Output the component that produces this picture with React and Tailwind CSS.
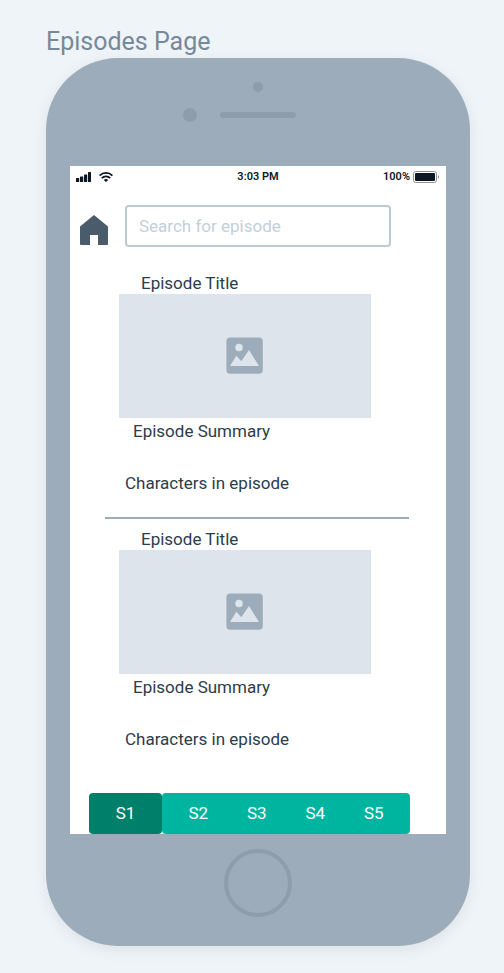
const seasons = ['S2', 'S3', 'S4', 'S5'];

function StatusBar() {
  return (
    <div className="grid h-5 grid-cols-3 items-center px-1.5 text-[11px] leading-5 font-semibold text-[#0d1822]">
      <div className="flex items-center gap-2">
        <svg width="15" height="10" viewBox="0 0 15 10" fill="currentColor" aria-hidden="true">
          <rect x="0" y="6" width="3.2" height="4" rx="0.5" />
          <rect x="4" y="4.5" width="3.2" height="5.5" rx="0.5" />
          <rect x="8" y="2.5" width="3.2" height="7.5" rx="0.5" />
          <rect x="12" y="0" width="3" height="10" rx="0.5" />
        </svg>
        <svg width="14" height="10" viewBox="0 0 14 10" fill="none" stroke="currentColor" strokeWidth="1.8" aria-hidden="true">
          <path d="M0.6 3.6C4.2 0 9.8 0 13.4 3.6" />
          <path d="M2.8 6.1C5.2 3.7 8.8 3.7 11.2 6.1" />
          <path d="M4.8 7.9C6 6.7 8 6.7 9.2 7.9L7 10Z" fill="currentColor" stroke="none" />
        </svg>
      </div>
      <span className="pt-px text-center">3:03 PM</span>
      <div className="flex items-center justify-end gap-[3px]">
        <span className="pt-px">100%</span>
        <svg width="27" height="12" viewBox="0 0 27 12" aria-hidden="true">
          <rect x="0.5" y="0.5" width="23" height="11" rx="2.2" fill="none" stroke="#8e9399" />
          <rect x="2" y="2" width="20" height="8" rx="1" fill="#0d1822" />
          <path d="M25 4Q27 6 25 8Z" fill="#8e9399" />
        </svg>
      </div>
    </div>
  );
}

function Episode() {
  return (
    <article className="text-[17px] leading-[22px] text-[#2b3c4b]">
      <h2 className="pl-[71px]">Episode Title</h2>
      <div className="mr-[75px] ml-[49px] flex h-[124px] items-center justify-center bg-[#dde4ec]">
        <svg width="38" height="38" viewBox="0 0 38 38" aria-hidden="true">
          <rect x="0.4" y="0.4" width="36.4" height="36.4" rx="4" fill="#9dacba" />
          <circle cx="13" cy="10.5" r="3.8" fill="#dde4ec" />
          <path d="M4 29L10.3 18.8L15.3 24.3L23 13L33 29Z" fill="#dde4ec" />
        </svg>
      </div>
      <p className="mt-[2px] pl-[63px]">Episode Summary</p>
      <p className="mt-[30px] pl-[55px]">Characters in episode</p>
    </article>
  );
}

export default function App() {
  return (
    <main className="min-h-screen bg-[#eef4f7] pt-[26px] pr-[34px] pb-[27px] pl-[46px] font-['Roboto',sans-serif]">
      <h1 className="text-[25px] leading-8 text-[#778899]">Episodes Page</h1>
      <div className="rounded-[72px] bg-[#9dacba] px-6 shadow-[0_4px_16px_rgba(0,0,0,0.08)]">
        <div className="flex h-[108px] flex-col items-center pt-6">
          <div className="h-2.5 w-2.5 rounded-full bg-[#8e9dac]" />
          <div className="mt-4 grid w-full grid-cols-[1fr_76px_1fr] items-center">
            <div className="mr-[23px] h-3.5 w-3.5 justify-self-end rounded-full bg-[#8e9dac]" />
            <div className="h-1.5 rounded-full bg-[#8e9dac]" />
          </div>
        </div>

        <div className="bg-white">
          <StatusBar />
          <header className="flex items-center gap-[17px] pt-[19px] pr-[55px] pl-2.5">
            <a href="#home" aria-label="Home" className="mt-2 shrink-0">
              <svg width="28" height="30" viewBox="0 0 28 30" fill="#4a5b6b" aria-hidden="true">
                <path d="M14 0L28 11.5V29Q28 30 27 30H18V20H10V30H1Q0 30 0 29V11.5Z" />
              </svg>
            </a>
            <input
              type="search"
              aria-label="Search for episode"
              placeholder="Search for episode"
              className="h-[42px] min-w-0 flex-1 rounded border-2 border-[#bdcad6] bg-white px-3 text-[17px] text-[#2b3c4b] outline-none placeholder:text-[#c3cfda]"
            />
          </header>

          <div className="pt-[25px]">
            <Episode />
            <hr className="mt-[23px] mr-[37px] mb-[9px] ml-[35px] border-t-2 border-[#9dacba]" />
            <Episode />
          </div>

          <nav aria-label="Seasons" className="mt-[43px] mr-9 ml-[19px] flex h-[41px] text-[17px] text-white">
            <button type="button" aria-pressed="true" className="w-[73px] rounded bg-[#00806a]">S1</button>
            <div className="flex flex-1 rounded bg-[#00b5a0] px-[7px]">
              {seasons.map((season) => (
                <button key={season} type="button" aria-pressed="false" className="flex-1">{season}</button>
              ))}
            </div>
          </nav>
        </div>

        <div className="flex h-28 items-start justify-center pt-[15px]">
          <button type="button" aria-label="Home button" className="h-[68px] w-[68px] rounded-full border-4 border-[#8e9dac]" />
        </div>
      </div>
    </main>
  );
}
